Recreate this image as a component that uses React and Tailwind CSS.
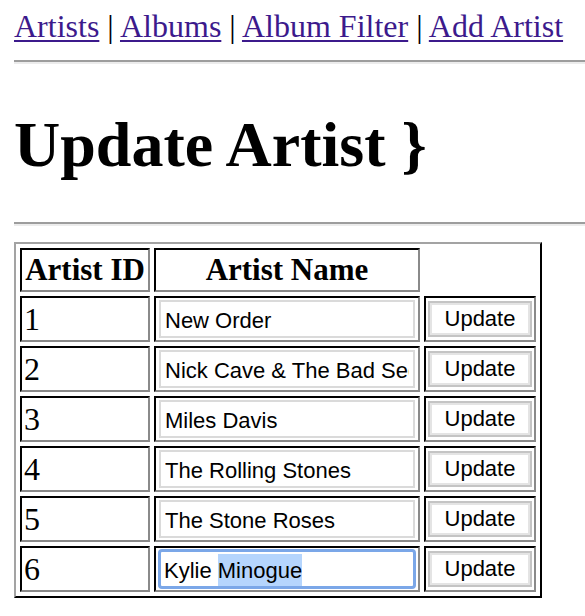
import React from 'react';

const artists = [
  { id: 1, name: 'New Order' },
  { id: 2, name: 'Nick Cave & The Bad Seeds' },
  { id: 3, name: 'Miles Davis' },
  { id: 4, name: 'The Rolling Stones' },
  { id: 5, name: 'The Stone Roses' },
];

const cell = 'border-2 border-t-black border-l-black border-r-[#8a8a8a] border-b-[#8a8a8a] p-[2px]';
const link = 'text-[#3c1a8c] underline decoration-2 underline-offset-[3px]';

function UpdateButton() {
  return (
    <button
      type="button"
      className="block mx-auto w-[104px] h-[36px] bg-white border-2 border-[#c4c4c4] shadow-[inset_0_0_0_2px_#e4e4e4] font-['Liberation_Sans',Arial,sans-serif] text-[22px] leading-none text-black"
    >
      Update
    </button>
  );
}

function NameInput({ value }) {
  return (
    <input
      type="text"
      defaultValue={value}
      className="block w-[256px] h-[38px] mx-auto bg-white border-2 border-[#dadada] px-[4px] pt-[3px] font-['Liberation_Sans',Arial,sans-serif] text-[22px] text-black outline-none"
    />
  );
}

// focused field with part of the text selected
function FocusedInput({ value, selected }) {
  return (
    <div className="w-[258px] h-[40px] -my-[1px] mx-auto flex items-center pt-[3px] bg-white border-[3px] border-[#7ba7e8] rounded-[4px] px-[3px] font-['Liberation_Sans',Arial,sans-serif] text-[22px] text-black whitespace-pre overflow-hidden">
      <span>{value}</span>
      <span className="bg-[#b5d5fd]">{selected}</span>
    </div>
  );
}

export default function App() {
  return (
    <div className="w-[585px] h-[616px] overflow-hidden bg-white text-black font-['Liberation_Serif','Times_New_Roman',serif] pl-[14px]">
      <nav className="pt-[8px] text-[32px] leading-[37px] whitespace-nowrap">
        <a href="#" className={link}>Artists</a> | <a href="#" className={link}>Albums</a> |{' '}
        <a href="#" className={link}>Album Filter</a> | <a href="#" className={link}>Add Artist</a>
      </nav>
      <hr className="mt-[15px] w-[620px] h-0 border-0 border-t-2 border-t-[#9d9d9d] border-b-2 border-b-[#ececec]" />

      <h1 className="mt-[44px] text-[64px] leading-[74px] font-bold">Update Artist }</h1>
      <hr className="mt-[40px] w-[620px] h-0 border-0 border-t-2 border-t-[#9d9d9d] border-b-2 border-b-[#ececec]" />

      <table className="mt-[16px] w-[528px] table-fixed border-separate border-spacing-[4px] border-2 border-t-[#a3a3a3] border-l-[#a3a3a3] border-r-black border-b-black">
        <colgroup>
          <col className="w-[130px]" />
          <col className="w-[266px]" />
          <col className="w-[112px]" />
        </colgroup>
        <thead>
          <tr className="h-[44px]">
            <th className={`${cell} text-[31px] leading-[36px] font-bold whitespace-nowrap`}>Artist ID</th>
            <th className={`${cell} text-[31px] leading-[36px] font-bold`}>Artist Name</th>
          </tr>
        </thead>
        <tbody>
          {artists.map((a) => (
            <tr key={a.id} className="h-[46px]">
              <td className={`${cell} text-[32px] leading-[36px] align-middle`}>{a.id}</td>
              <td className={cell}>
                <NameInput value={a.name} />
              </td>
              <td className={cell}>
                <UpdateButton />
              </td>
            </tr>
          ))}
          <tr className="h-[46px]">
            <td className={`${cell} text-[32px] leading-[36px] align-middle`}>6</td>
            <td className={cell}>
              <FocusedInput value="Kylie " selected="Minogue" />
            </td>
            <td className={cell}>
              <UpdateButton />
            </td>
          </tr>
        </tbody>
      </table>
    </div>
  );
}
